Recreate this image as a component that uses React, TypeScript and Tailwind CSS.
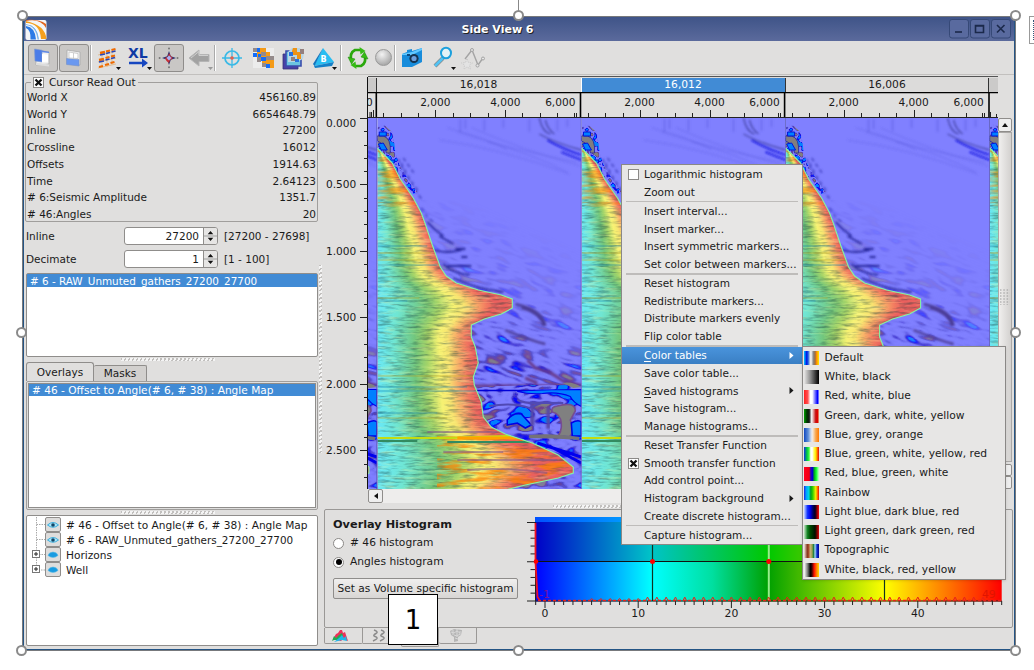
import React from "react";

const edge: [number, number][] = [
  [0, 148], [5, 153], [15, 163], [23, 179], [36, 198], [44, 213], [48, 224], [55, 245], [63, 267],
  [69, 276], [79, 283], [101, 290], [124, 295], [135, 299], [135, 308], [124, 314], [107, 319], [94, 325],
  [94, 337], [98, 347], [101, 363], [96, 377], [97, 385], [104, 402], [106, 417], [114, 427], [128, 434],
  [155, 443], [181, 455], [196, 467], [196, 473], [181, 478], [148, 485], [130, 489.5],
];

const edgeLine = edge.map(([x, y]) => `${x},${y}`).join(" ");

function edgeAt(y: number) {
  for (let i = 1; i < edge.length; i++) {
    const [x0, y0] = edge[i - 1];
    const [x1, y1] = edge[i];
    if (y <= y1) return x0 + ((x1 - x0) * (y - y0)) / (y1 - y0);
  }
  return 130;
}

const rows = Array.from({ length: 171 }, (_, i) => {
  const y = 148 + i * 2;
  let w = 0;
  for (let k = -6; k <= 6; k++) w += edgeAt(Math.max(149, Math.min(489, y + k * 2)));
  w /= 13;
  if (w > 92) w = 92 + (w - 92) * 0.7;
  return { y, w: Math.max(w, 4) };
});

function NoiseFilter({ id, freq, seed, slope, offset }: { id: string; freq: string; seed: number; slope: number; offset: number }) {
  return (
    <filter id={id} x="0" y="0" width="100%" height="100%" colorInterpolationFilters="sRGB">
      <feTurbulence type="fractalNoise" baseFrequency={freq} numOctaves={2} seed={seed} />
      <feColorMatrix values={`${slope} 0 0 0 ${offset} ${slope} 0 0 0 ${offset} ${slope} 0 0 0 ${offset} 0 0 0 0 1`} />
      <feComponentTransfer>
        <feFuncR type="table" tableValues="0 0 0.25 0.46 0.5 0.5 0.46 0.29 0.44 0.5 0.5" />
        <feFuncG type="table" tableValues="0.5 0 0.2 0.46 0.5 0.5 0.46 0.27 0.25 0.48 0.5" />
        <feFuncB type="table" tableValues="1 1 0.8 0.96 1 1 0.96 0.78 0.55 0.5 0.5" />
      </feComponentTransfer>
      <feComposite in2="SourceGraphic" operator="in" />
    </filter>
  );
}

function Seismic() {
  return (
    <svg className="block h-[371px] w-[630px]" viewBox="368 118 630 371">
      <defs>
        <linearGradient id="angle">
          <stop offset="0" stopColor="#68e8f8" />
          <stop offset="0.18" stopColor="#70e6d2" />
          <stop offset="0.4" stopColor="#72c67c" />
          <stop offset="0.52" stopColor="#a4d468" />
          <stop offset="0.65" stopColor="#f6f272" />
          <stop offset="0.74" stopColor="#f8e470" />
          <stop offset="0.84" stopColor="#f8ac68" />
          <stop offset="0.93" stopColor="#f27a60" />
          <stop offset="1" stopColor="#ea605e" />
        </linearGradient>
        <linearGradient id="diag" gradientUnits="userSpaceOnUse" x1="70" y1="400" x2="150" y2="225">
          <stop offset="0" stopColor="white" />
          <stop offset="0.35" stopColor="white" stopOpacity="0.9" />
          <stop offset="0.7" stopColor="white" stopOpacity="0.2" />
          <stop offset="1" stopColor="white" stopOpacity="0" />
        </linearGradient>
        <mask id="deep" maskUnits="userSpaceOnUse" x="0" y="118" width="205" height="372">
          <rect x="0" y="200" width="205" height="290" fill="url(#diag)" />
        </mask>
        <NoiseFilter id="soft" freq="0.04 0.12" seed={7} slope={1.5} offset={-0.27} />
        <NoiseFilter id="strong" freq="0.045 0.09" seed={12} slope={2.4} offset={-0.8} />
        <NoiseFilter id="shallow" freq="0.13 0.12" seed={4} slope={3.4} offset={-1.3} />
        <filter id="streak" x="0" y="0" width="100%" height="100%" colorInterpolationFilters="sRGB">
          <feTurbulence type="fractalNoise" baseFrequency="0.07 0.42" numOctaves={3} seed={3} />
          <feColorMatrix values="0 0 0 0 0.1  0 0 0 0 0.25  0 0 0 0 0.25  2.6 0 0 0 -1.15" />
        </filter>
        <filter id="glint" x="0" y="0" width="100%" height="100%" colorInterpolationFilters="sRGB">
          <feTurbulence type="fractalNoise" baseFrequency="0.05 0.3" numOctaves={3} seed={21} />
          <feColorMatrix values="0 0 0 0 1  0 0 0 0 1  0 0 0 0 0.65  3 0 0 0 -1.5" />
        </filter>
        <filter id="warm" x="0" y="0" width="100%" height="100%" colorInterpolationFilters="sRGB">
          <feTurbulence type="fractalNoise" baseFrequency="0.03 0.17" numOctaves={3} seed={9} />
          <feColorMatrix values="0 0 0 0 1  0 0 0 0 0.5  0 0 0 0 0  5 0 0 0 -2.4" />
        </filter>
        <filter id="blur1"><feGaussianBlur stdDeviation="0.8" /></filter>
        <clipPath id="muted"><polygon points={`0,148 ${edgeLine} 0,490`} /></clipPath>
        <clipPath id="frame"><rect x="0" y="118" width="204.2" height="372" /></clipPath>
        <g id="gather" clipPath="url(#frame)">
          <rect x="0" y="118" width="205" height="372" fill="#8080ff" />
          <g mask="url(#deep)"><rect x="0" y="120" width="400" height="390" filter="url(#soft)" transform="rotate(18 0 200)" /></g>
          <g fill="none" filter="url(#blur1)">
            <g stroke="#5050d4" strokeOpacity="0.35" strokeWidth="1">
              <path d="M80 132q55 18 120 30M95 128q50 22 108 38M62 140q60 8 130 34M110 142q45 12 80 30M70 128q40 10 60 22" />
              <path d="M83 119v13M88 119v10M107 119v12M126 119v9M152 119v13M180 119v12M190 119v8" strokeWidth="2" />
            </g>
            <path d="M162 118q3 14 11 16M168 120q2 9 9 14M162 134q16 9 42 16" stroke="#4a4aad" strokeWidth="1.4" />
            <path d="M170 140q18 10 34 15M184 152l20 8" stroke="#1212e0" strokeWidth="1.6" />
            <path d="M50 222q7 8 16 14M62 236l14 8M56 250q14 4 28 0M66 264q8 9 26 11M76 278q20 10 50 14M70 266h24M78 249h10M84 257h6" stroke="#28289c" strokeWidth="1.8" />
            <path d="M144 308q20 5 22 18M138 304q28 6 30 22M128 330q24 10 40 14" stroke="#4c3c98" strokeWidth="2.4" />
            <path d="M24 163q6 14 17 28M21 159q8 22 25 42M26 158l12 17M44 208q5 9 12 14" stroke="#4b4bcb" strokeWidth="1.8" strokeDasharray="4 3" />
          </g>
          <path d="M0 128q5-8 9-1l6 5q2 8 3 21l5 14 9 14 8 11-4 2-18-23-8-14-10-9Z" filter="url(#shallow)" />
          <path d="M0 136h6q8 2 7 17h-4q-1-9-9-12Z" fill="#817e80" stroke="#26269d" strokeWidth="0.8" />
          <path d="M2 132h7v4H2ZM1 144l5-1 4 7H4ZM8 160h9v3H8Z" fill="#0080ff" stroke="#0015da" />
          <path d="M150 360l8 8 14 4 14 9 20 5M148 378l12 5M96 386h108" fill="none" stroke="#673a8b" strokeWidth="3" filter="url(#blur1)" />
          <path d="M100 387q40-2 104-2v55q-60 2-90-6l-12-20Z" filter="url(#strong)" />
          <path d="M98 390.500h60" stroke="#0000d8" strokeWidth="1.5" />
          <path d="M140 391.500q20-2 64-2v17q-8-4-11-10-12-5-28-3-12 1-25-2Z" fill="#0080ff" stroke="#0000ed" strokeWidth="1.2" />
          <path d="M185 383q10-2 19 4l-8 1Z" fill="#808080" />
          <path d="M180 406q18-5 18 5l-5 9 4 11-6 7h-12q6-6 5-15t-9-11q-2-5 5-6Z" fill="#808080" stroke="#764c91" strokeWidth="1.6" />
          <path d="M130 420q6-8 14-6l10 11-6 3-8-5-10 2ZM194 423q7-4 10-1v14h-9Z" fill="#0080ff" stroke="#0000e5" strokeWidth="1.6" />
          <path d="M155 404v22M171 407v22" stroke="#5846a5" strokeWidth="4" filter="url(#blur1)" />
          <path d="M112 406q24-4 40 2l12-5 22 0M140 400q12 5 28 2" fill="none" stroke="#5049b5" strokeWidth="2" />
          <path d="M145 438q20-7 60 0v52h-80l60-15Z" filter="url(#strong)" opacity="0.8" />
          <path d="M152 435q25-2 50 2v3q-24-2-50-2Z" fill="#747279" />
          <path d="M160 443l44 14M172 446l32 17" stroke="#0000ee" strokeWidth="3" />
          <g clipPath="url(#muted)">
            <rect x="0" y="148" width="205" height="342" fill="#ea605e" />
            {rows.map((r) => (
              <rect key={r.y} x="0" y={r.y} width={r.w} height="2.3" fill="url(#angle)" />
            ))}
            <rect x="0" y="148" width="205" height="342" filter="url(#streak)" opacity="0.42" />
            <rect x="0" y="148" width="205" height="342" filter="url(#glint)" opacity="0.3" />
            <rect x="60" y="436" width="140" height="54" filter="url(#warm)" opacity="0.7" />
            <rect x="0" y="148" width="60" height="60" filter="url(#warm)" opacity="0.5" />
            <g fill="none" opacity="0.55">
              <path d="M0 253h54M0 260h62M0 298h42M0 376h96M0 418h70" stroke="#b8a020" strokeWidth="1.2" />
              <path d="M0 265h60M0 301h30M0 391h100M0 387h90M0 413h60M0 246h50" stroke="#107fae" strokeWidth="1.1" />
              <path d="M50 432h70M66 452h60M90 470q40-3 80 3M80 460h100" stroke="#7d558c" strokeWidth="2" />
            </g>
            <path d="M0 438h70l60-2 22 4" stroke="#c4dc10" strokeWidth="1.8" fill="none" />
            <path d="M80 438h62" stroke="#ffa200" strokeWidth="3" />
            <path d="M0 441h40M70 442h120" stroke="#338b60" strokeWidth="2" />
          </g>
          <polyline points={edgeLine} fill="none" stroke="#83f5a4" strokeWidth="1.1" />
          <path d="M204 118v372" stroke="#5555aa" strokeWidth="1" />
        </g>
      </defs>
      <use href="#gather" x="173" />
      <use href="#gather" x="377.3" />
      <use href="#gather" x="581.5" />
      <use href="#gather" x="785.6" />
      <use href="#gather" x="989.7" />
    </svg>
  );
}

function TopAxis() {
  const starts = [377.3, 581.5, 785.6];
  return (
    <svg className="block h-[26px] w-[630px]" viewBox="368 92 630 26" fontFamily="DejaVu Sans, sans-serif" fontSize="10.6" fill="#1a1a1a">
      <path d="M368 92.5H998" stroke="#000" strokeWidth="1.6" />
      <path d="M368 117.5H998M370 112v5M371.5 112v5M373.5 110v7M990.5 112v5M996.5 114v3" stroke="#222" />
      <text x="366" y="106">0</text>
      {starts.map((s) => (
        <g key={s}>
          <path d={`M${s - 1} 92v25`} stroke="#000" strokeWidth="1.6" />
          {[7, 24.5, 42, 59, 76.5, 94, 111.5, 129, 146, 163.5, 181, 197.5, 199.5].map((d, i) => (
            <path key={d} d={`M${Math.round(s + d) - 0.5} ${i === 3 || i === 7 ? 110 : 113}V117`} stroke="#222" />
          ))}
          <text x={s + 58} y="106" textAnchor="middle">2,000</text>
          <text x={s + 128} y="106" textAnchor="middle">4,000</text>
          <text x={s + 183} y="106" textAnchor="middle">6,000</text>
        </g>
      ))}
      <path d="M989 92v25" stroke="#000" strokeWidth="1.6" />
    </svg>
  );
}

function SideAxis() {
  return (
    <svg className="block h-[412px] w-[44px]" viewBox="324 77 44 412" fontFamily="DejaVu Sans, sans-serif" fontSize="10.6" fill="#1a1a1a">
      <path d="M368 77V489" stroke="#111" strokeWidth="2" />
      {Array.from({ length: 28 }, (_, i) => {
        const y = 118 + i * 13.29;
        return <path key={i} d={`M${i % 5 ? 364 : 360} ${Math.round(y) + 0.5}H368`} stroke="#222" />;
      })}
      {["0.000", "0.500", "1.000", "1.500", "2.000", "2.500"].map((t, i) => (
        <text key={t} x="326" y={i === 0 ? 127 : 122 + i * 66.4}>{t}</text>
      ))}
    </svg>
  );
}

function Histogram() {
  const px = (v: number) => 545 + v * 9.32;
  return (
    <svg className="block h-[112px] w-[480px]" viewBox="524 512 480 112" fontFamily="DejaVu Sans, sans-serif" fontSize="10.8" fill="#1a1a1a">
      <defs>
        <linearGradient id="lower">
          <stop offset="0" stopColor="#0000ff" /><stop offset=".25" stopColor="#00ffff" /><stop offset=".38" stopColor="#00dfa0" /><stop offset=".5" stopColor="#00a000" /><stop offset=".75" stopColor="#ffff00" /><stop offset="1" stopColor="#ff0000" />
        </linearGradient>
        <linearGradient id="upper">
          <stop offset="0" stopColor="#0000c8" /><stop offset=".25" stopColor="#00c4c8" /><stop offset=".5" stopColor="#00c800" /><stop offset=".75" stopColor="#c8c800" /><stop offset="1" stopColor="#c80000" />
        </linearGradient>
        <linearGradient id="strip"><stop offset="0" stopColor="#0050ff" /><stop offset=".2" stopColor="#009bff" /><stop offset="1" stopColor="#00ffff" /></linearGradient>
      </defs>
      <rect x="535" y="517" width="466.7" height="5" fill="url(#strip)" />
      <rect x="535" y="522" width="466.7" height="40" fill="url(#upper)" />
      <rect x="535" y="561.5" width="466.7" height="40" fill="url(#lower)" />
      <path d="M535 561.5H1001" stroke="#111" strokeWidth="1.2" />
      <path d="M652.5 522V601M884.5 522V601" stroke="#132" strokeWidth="1.2" />
      <path d="M768.8 522V601" stroke="#98ed8b" strokeWidth="2" />
      <path d="M535.5 522V601H1001.5" fill="none" stroke="#222" />
      {Array.from({ length: 11 }, (_, i) => (
        <path key={i} d={`M${i % 5 ? 530.5 : 527} ${522.5 + i * 7.85}H535`} stroke="#222" />
      ))}
      {Array.from({ length: 51 }, (_, i) => (
        <path key={i} d={`M${px(i - 1)} 601v${(i - 1) % 10 === 0 ? 7 : 4}`} stroke="#222" />
      ))}
      <path d="M535.5 523V562l2 35 2 3" fill="none" stroke="#f01020" strokeWidth="1.8" />
      <path d="M538 600.5H1001" stroke="#e8201a" strokeWidth="1.3" strokeDasharray="3 2" />
      {Array.from({ length: 43 }, (_, i) => (
        <path key={i} d={`M${px(i + 5) - 1.8} 600.5l1.8 ${i < 6 ? -2 : -3.4} 1.8 ${i < 6 ? 2 : 3.4}`} fill="none" stroke="#e8201a" strokeWidth="1" />
      ))}
      <g fill="#f00"><circle cx="536" cy="561.5" r="2.3" /><circle cx="652.5" cy="561.5" r="2.5" /><circle cx="768.8" cy="561.5" r="2.5" /></g>
      <text x="539" y="598" fill="#7b109c">-1</text>
      <text x="982" y="598" fill="#df1500">49</text>
      {[0, 10, 20, 30, 40].map((v) => (
        <text key={v} x={px(v)} y="617" textAnchor="middle">{v}</text>
      ))}
    </svg>
  );
}

const menu: (string | null)[] = [
  "Logarithmic histogram", "Zoom out", null,
  "Insert interval...", "Insert marker...", "Insert symmetric markers...", "Set color between markers...", null,
  "Reset histogram", "Redistribute markers...", "Distribute markers evenly", "Flip color table", null,
  "Color tables", "Save color table...", "Saved histograms", "Save histogram...", "Manage histograms...", null,
  "Reset Transfer Function", "Smooth transfer function", "Add control point...", "Histogram background", "Create discrete histogram...", null,
  "Capture histogram...",
];

function Box({ checked }: { checked?: boolean }) {
  return (
    <span className="flex h-[11px] w-[11px] shrink-0 items-center justify-center border border-[#8c8a88] bg-white">
      {checked && (
        <svg width="9" height="9" viewBox="0 0 9 9"><path d="M1.5 1.5l6 6M7.5 1.5l-6 6" stroke="#111" strokeWidth="2.3" /></svg>
      )}
    </span>
  );
}

function ContextMenu() {
  return (
    <div className="absolute left-[621px] top-[164px] flex h-[381px] w-[182px] flex-col border border-[#8a8886] bg-[#e7e6e5] pt-[0.5px] text-[10.5px]">
      {menu.map((t, i) => {
        if (t === null) return <div key={i} className="mx-1 h-[1.7px] shrink-0 bg-[#bebcba]" />;
        const active = t === "Color tables";
        const under = active || t === "Saved histograms";
        const arrow = under || t === "Histogram background";
        return (
          <div key={i} className={active ? "flex h-[17.67px] items-center bg-gradient-to-b from-[#4a94dc] to-[#3a7fc4] text-white" : "flex h-[17.67px] items-center"}>
            <span className="flex w-[22px] items-center pl-[6px]">
              {i === 0 && <Box />}
              {t === "Smooth transfer function" && <Box checked />}
            </span>
            <span className={t.startsWith("Set color") ? "grow whitespace-nowrap tracking-[0.04px]" : "grow whitespace-nowrap"}>
              {under ? <><span className="border-b border-current">{t[0]}</span>{t.slice(1)}</> : t}
            </span>
            {arrow && <svg className="mr-2 shrink-0" width="5" height="7" viewBox="0 0 5 7"><path d="M0.5 0v7L4.5 3.5z" fill="currentColor" /></svg>}
          </div>
        );
      })}
    </div>
  );
}

const tables: { name: string; cls: string }[] = [
  { name: "Default", cls: "bg-[linear-gradient(90deg,#00c8ff_0%,#0010e8_18%,#2060e0_28%,#e8e8e8_42%,#f0f0f0_48%,#888_62%,#a06a40_74%,#ff9000_84%,#ffe800_100%)]" },
  { name: "White, black", cls: "bg-[linear-gradient(90deg,#e7e6e5_0%,#888_45%,#222_85%,#000_100%)]" },
  { name: "Red, white, blue", cls: "bg-[linear-gradient(90deg,#ff2020_0%,#ff5050_25%,#fff_42%,#fff_55%,#8080ff_72%,#0000ff_90%,#a0a0ff_100%)]" },
  { name: "Green, dark, white, yellow", cls: "bg-[linear-gradient(90deg,#00a000_0%,#003000_20%,#181818_35%,#eee_50%,#e8c8c8_58%,#c81010_78%,#e00000_90%,#e8b080_100%)]" },
  { name: "Blue, grey, orange", cls: "bg-[linear-gradient(90deg,#1048c0_0%,#6090d8_28%,#d8e0f0_48%,#f4e8dc_58%,#f8a850_78%,#ff7800_100%)]" },
  { name: "Blue, green, white, yellow, red", cls: "bg-[linear-gradient(90deg,#1030e0_0%,#00c840_20%,#40ff40_34%,#fff_45%,#fff_55%,#ffff70_65%,#ffe800_78%,#ff5000_92%,#d01010_100%)]" },
  { name: "Red, blue, green, white", cls: "bg-[linear-gradient(90deg,#ff0020_0%,#f00010_35%,#3000c0_45%,#0000d0_57%,#00a020_68%,#10ff30_82%,#d0ffd0_100%)]" },
  { name: "Rainbow", cls: "bg-[linear-gradient(90deg,#2020e0_0%,#00a0ff_14%,#00d8e0_32%,#00a020_45%,#30d000_58%,#f0f000_78%,#ff7000_90%,#e81000_100%)]" },
  { name: "Light blue, dark blue, red", cls: "bg-[linear-gradient(90deg,#c8d8ff_0%,#1030ff_24%,#0000e8_42%,#000060_60%,#000020_74%,#c00000_92%,#f01010_100%)]" },
  { name: "Light green, dark green, red", cls: "bg-[linear-gradient(90deg,#c8e8c8_0%,#108020_24%,#004800_42%,#002800_60%,#001000_74%,#a00000_92%,#d01010_100%)]" },
  { name: "Topographic", cls: "bg-[linear-gradient(90deg,#f0e8e0_0%,#883820_22%,#a84828_30%,#c8b078_42%,#a0a050_54%,#208040_63%,#a0d8f0_74%,#1030d0_86%,#000090_100%)]" },
  { name: "White, black, red, yellow", cls: "bg-[linear-gradient(90deg,#fff_0%,#777_25%,#000_42%,#300_52%,#ff1000_68%,#ff7000_82%,#ffd800_100%)]" },
];

function SubMenu() {
  return (
    <div className="absolute left-[802px] top-[346px] flex h-[234px] w-[204px] flex-col border border-[#8a8886] bg-[#e7e6e5] pt-[1.5px] text-[10.7px] shadow-sm">
      {tables.map((t) => (
        <div key={t.name} className="flex h-[19.27px] shrink-0 items-center whitespace-nowrap">
          <span className={`ml-[1px] mr-[5.5px] h-[14px] w-[15px] ${t.cls}`} />
          {t.name}
        </div>
      ))}
    </div>
  );
}

function Caret() {
  return <path d="M22 23h5l-2.5 3z" fill="#111" />;
}
function Icon({ children, w = "w-[30px]" }: { children: React.ReactNode; w?: string }) {
  return <div className={`flex shrink-0 items-center justify-center ${w}`}><svg width="28" height="28" viewBox="0 0 28 28" className="overflow-visible">{children}</svg></div>;
}
function Pressed({ children }: { children: React.ReactNode }) {
  return <div className="mr-px flex h-[28px] w-[30px] shrink-0 items-center justify-center rounded-[3px] border border-[#8f8d8b] bg-[#c9c7c5]"><svg width="28" height="26" viewBox="0 1 28 26">{children}</svg></div>;
}
const Sep = () => <div className="h-[26px] w-[2px] shrink-0 border-l border-[#aaa] bg-white" />;

function Toolbar() {
  return (
    <div className="flex h-[34px] shrink-0 items-center border-b border-[#c2c0be] pl-[4px]">
      <Pressed>
        <path d="M7 6l13 2v12l-13 1z" fill="#f1f1f1" stroke="#aaa" strokeWidth=".8" /><path d="M5.5 5l7.5 1.2V18l-7-1z" fill="#4a7ce8" stroke="#7d98cf" strokeWidth=".6" /><path d="M13 6.5l7 1.2V9l-7-.8z" fill="#5c86e6" /><path d="M13 10l6 .8v7L13 18z" fill="#fff" /><path d="M7 21l13 1.5v-2L7 18.5z" fill="#ddd" />
      </Pressed>
      <Pressed>
        <path d="M7 6l13 2v13l-13-1z" fill="#f1f1f1" stroke="#aaa" strokeWidth=".8" /><path d="M6.5 14.5l12.5 1v6.5l-12.5-1.5z" fill="#6a98f0" stroke="#7b94c8" strokeWidth=".6" /><path d="M9 8l9 1.5v5L9 14zM13.5 9v5.5" fill="#fff" stroke="#bbb" strokeWidth=".7" />
      </Pressed>
      <Sep />
      <Icon w="w-[31px]">
        <path d="M8 7v17M13 6v17M18 5v16M4 11l18-4M4 18l18-4M4 24l18-4" stroke="#e0c095" fill="none" />
        <path d="M6 9l5-1M12 7.5l4-1M17.5 6l4-1M5 16l5-1M11.5 14l4-1M17 12.5l4-1M5 23l4-1M11 21l4-1M16.5 19l4-1" stroke="#ef6a00" strokeWidth="2.3" />
        <path d="M6 11l5-1M12 9.5l4-1M17.5 8l4-1M5 18l5-1M11.5 16l4-1M17 14.5l4-1" stroke="#2846ba" strokeWidth="1.7" /><Caret />
      </Icon>
      <Icon w="w-[31px]">
        <text x="3" y="14" fontFamily="DejaVu Sans" fontWeight="bold" fontSize="14" fill="#103aa4">XL</text>
        <path d="M4 19h17" stroke="#1747c0" strokeWidth="2.5" /><path d="M17 14.5l6 4.5-6 4.5z" fill="#1747c0" /><Caret />
      </Icon>
      <Pressed>
        <path d="M14 7l1.8 5.2 5.2 1.8-5.2 1.8L14 21l-1.8-5.2L7 14l5.2-1.8z" fill="#252c6c" /><path d="M14 9l1.8 3.2L18 14l-3.2 2.5L14 19l-2.5-2L10 14l3-1.5z" fill="#c72e35" /><path d="M14 11.5l2.5 2.5-2.5 2.5-2.5-2.5z" fill="#a8b4f4" />
        <g fill="#777"><circle cx="14" cy="4.6" r="1" /><circle cx="4.6" cy="14" r="1" /><circle cx="22.5" cy="14" r="1" /><circle cx="14" cy="23.3" r="1" /></g>
      </Pressed>
      <Icon w="w-[29px]"><path d="M3 14L13 6v4.5h10v7H13V22z" fill="#a2a2a2" stroke="#b5b5b5" /><path d="M5 14l8-6.5v4h9" fill="none" stroke="#cfcfcf" /><path d="M22 23h5l-2.5 3z" fill="#999" /></Icon>
      <Sep />
      <Icon w="w-[31px]"><circle cx="14" cy="14" r="7" fill="none" stroke="#39b9e6" strokeWidth="1.7" /><path d="M14 4v20M4 14h20" stroke="#39b9e6" strokeWidth="1.3" /><circle cx="14" cy="14" r="1.8" fill="#e2604c" /></Icon>
      <Icon w="w-[31px]">
        <rect x="4" y="4" width="21" height="20" fill="#ececec" />
        <path d="M8 4h9v4h4v8h4v8h-8v-3h-4v-4H8z" fill="#f49a16" />
        <path d="M4 4h4v4H4zM12 8h5v4h-5zM17 12h8v4h-8zM8 13h4v5H8zM13 19h4v4h-4z" fill="#948a8a" />
        <path d="M8 4h3v4H8zM4 9h4v4H4zM12 13h5v4h-5zM17 20h4v4h-4zM9 10h3v3H9z" fill="#126dfa" />
      </Icon>
      <Icon>
        <path d="M4 10h4v11h11v4H4z" fill="#4a3fa6" stroke="#353377" strokeWidth=".8" /><path d="M7 7h15v15H7z" fill="#6cc4e0" stroke="#3a4cac" strokeWidth="1.6" /><path d="M9 8l4-4h8l4 5-1 6-7 3H9z" fill="#b9d7e4" /><path d="M14 4h4v4h4v7h-4v-4h-5V7z" fill="#ef9315" /><path d="M10 8h4v4h-4zM16 15h4v3h-4z" fill="#2a72de" /><path d="M21 5h4v5h-4zM12 13h4v4h-4z" fill="#94807e" />
      </Icon>
      <Icon w="w-[32px]">
        <path d="M13 4l11 14-20 4z" fill="#28bdf2" /><path d="M13 4L3 20l1.5 2z" fill="#1374bd" /><path d="M4 22l20-4-2 4-17 2z" fill="#1480c8" /><text x="10.5" y="18" fontFamily="DejaVu Sans" fontWeight="bold" fontSize="8" fill="#fff">B</text><Caret />
      </Icon>
      <Sep />
      <Icon w="w-[31px]">
        <g fill="none" stroke="#2aa80c" strokeWidth="2.6"><path d="M7.5 17.5Q5 9 11 6h5" /><path d="M20.5 10.5Q23 19 17 22h-5" /></g>
        <path d="M15.5 3l6 4-5 3.5zM12.5 25l-6-4 5-3.5z" fill="#36bb15" /><path d="M4 13l3.5 7 3.5-5zM24 15l-3.5-7L17 13z" fill="#36bb15" stroke="#168705" strokeWidth=".5" />
      </Icon>
      <div className="flex w-[21px] shrink-0 justify-center"><div className="h-[17px] w-[17px] rounded-full border border-[#999] bg-[radial-gradient(circle_at_40%_30%,#f3f3f3,#aaa_75%)]" /></div>
      <Sep />
      <Icon w="w-[31px]">
        <path d="M4 10l5-2V6l5-1v2l10-3v14l-10 5H4z" fill="#188cdb" /><path d="M4 10l10-2 10-4v2L14 11H4z" fill="#61c8ff" /><circle cx="16" cy="14.5" r="4.6" fill="#17334f" /><circle cx="16" cy="14.5" r="2.6" fill="#6d9fdd" /><path d="M9 10h3v2H9z" fill="#0d4a80" />
      </Icon>
      <Icon w="w-[31px]"><path d="M14 14l-8 8" stroke="#888" strokeWidth="4" /><path d="M14 14l-8 8" stroke="#51c2f3" strokeWidth="2.6" /><ellipse cx="17" cy="9" rx="5" ry="5.3" fill="#e3f2f6" stroke="#1ca0dd" strokeWidth="2" /><Caret /></Icon>
      <Icon><path d="M6 15l7-9 6 15 5-7" fill="none" stroke="#a4a4a4" strokeWidth="1.4" /><g fill="#e6e6e6" stroke="#a3a3a3"><circle cx="13" cy="6" r="1.5" /><circle cx="18.5" cy="21.5" r="1.5" /><circle cx="24" cy="14.5" r="1.5" /></g><path d="M8 15l1.5 3.5 4 .5-3 2 1 4L8 23l-3 2 .5-4-3-2 4-.5z" fill="#e3e3e3" stroke="#bbb" strokeWidth=".6" strokeDasharray="1.5 1" /></Icon>
    </div>
  );
}

function Spin({ label, value, range }: { label: string; value: string; range: string }) {
  return (
    <div className="flex h-[22.7px] items-center">
      <span className="w-[99px] pl-px">{label}</span>
      <div className="flex h-[18px] w-[94px] overflow-hidden rounded-[3px] border border-[#8f8d8b] bg-white">
        <span className="flex grow items-center justify-end pr-1">{value}</span>
        <svg width="14" height="16" viewBox="0 0 14 16" className="border-l border-[#8f8d8b] bg-[#e6e5e4]"><path d="M0 8h14" stroke="#999" /><path d="M4 6h6L7 2.5zM4 10h6l-3 3.5z" fill="#111" /></svg>
      </div>
      <span className="ml-[6px]">{range}</span>
    </div>
  );
}

const Dots = () => <div className="h-[3px] w-[94px] bg-[repeating-linear-gradient(115deg,#c2c0be_0,#c2c0be_1.5px,#f4f4f4_1.5px,#f4f4f4_3.6px)]" />;

const readout = [
  ["World X", "456160.89"], ["World Y", "6654648.79"], ["Inline", "27200"], ["Crossline", "16012"],
  ["Offsets", "1914.63"], ["Time", "2.64123"], ["# 6:Seismic Amplitude", "1351.7"], ["# 46:Angles", "20"],
];

const tree = [
  { name: "# 46 - Offset to Angle(# 6, # 38) : Angle Map", eye: true },
  { name: "# 6 - RAW_Unmuted_gathers_27200_27700", eye: true },
  { name: "Horizons", eye: false },
  { name: "Well", eye: false },
];

function LeftPanel() {
  return (
    <div className="flex w-[295px] shrink-0 flex-col pl-[1px] text-[10.5px]">
      <div className="relative mt-[7px] h-[140px] w-[293px] shrink-0 rounded-[2px] border border-[#a09e9c] pt-[5.8px]">
        <div className="absolute -top-[7px] left-[5px] flex h-[12px] items-center gap-[5px] bg-[#e0dfde] pl-[2px] pr-[2px]"><Box checked />Cursor Read Out</div>
        {readout.map(([k, v]) => (
          <div key={k} className="flex h-[16.75px] items-center justify-between pl-px pr-[1px]"><span>{k}</span><span>{v}</span></div>
        ))}
      </div>
      <div className="mt-[3px] shrink-0"><Spin label="Inline" value="27200" range="[27200 - 27698]" /><Spin label="Decimate" value="1" range="[1 - 100]" /></div>
      <div className="ml-[1px] mt-[3px] h-[84px] w-[292px] shrink-0 rounded-[2px] border-[1.5px] border-[#8f8d8b] bg-white">
        <div className="flex h-[13px] items-center bg-[#418bd5] pl-[3px] text-[10.4px] text-white">{"# 6 - RAW_Unmuted_gathers_27200_27700"}</div>
      </div>
      <div className="mt-[1px] flex shrink-0 justify-center pr-2"><Dots /></div>
      <div className="ml-[1px] mt-px flex h-[19px] shrink-0 items-end">
        <div className="flex h-[19px] w-[68px] items-center justify-center rounded-t-[3px] border border-b-0 border-[#8f8d8b]">Overlays</div>
        <div className="flex h-[16px] w-[53px] items-center justify-center rounded-t-[2px] border border-b-0 border-l-0 border-[#8f8d8b] bg-[#d2d0ce] pb-px">Masks</div>
      </div>
      <div className="ml-[1px] h-[129px] w-[292px] shrink-0 rounded-[2px] border border-[#a09e9c] p-px">
        <div className="h-full border-[1.5px] border-t border-[#8f8d8b] bg-white">
          <div className="flex h-[12px] items-center bg-[#418bd5] pl-[3px] text-[10.6px] text-white">{"# 46 - Offset to Angle(# 6, # 38) : Angle Map"}</div>
        </div>
      </div>
      <div className="mt-[1px] flex shrink-0 justify-center pr-2"><Dots /></div>
      <div className="ml-[1px] mt-[1px] h-[131px] w-[292px] shrink-0 rounded-[2px] border-[1.5px] border-[#8f8d8b] bg-white pt-[1px] text-[10.6px]">
        {tree.map((t, i) => (
          <div key={t.name} className={i === 1 ? "flex h-[15px] items-center whitespace-nowrap text-[10.4px]" : "flex h-[15px] items-center whitespace-nowrap"}>
            <svg width="18" height="15" viewBox="0 0 18 15" className="shrink-0">
              <path d={t.name === "Well" ? "M9.5 0v8h9" : "M9.5 0v15M9.5 7.5h9"} fill="none" stroke="#aaa" strokeDasharray="1.5 1" />
              {!t.eye && <><rect x="5.5" y="3.5" width="7" height="7" fill="#fff" stroke="#777" /><path d="M7 7h4M9 5v4" stroke="#222" /></>}
            </svg>
            <svg width="16" height="15" viewBox="0 0 16 15" className="mr-[5px] shrink-0">
              <rect x=".5" y=".5" width="15" height="14" rx="1.5" fill="#dedddc" stroke="#8f8d8b" />
              {t.eye ? <><path d="M2.5 8q5.5-5 11 0-5.5 4.5-11 0z" fill="#aee7fb" stroke="#39aede" /><circle cx="8" cy="8" r="1.8" fill="#124565" /></> : <path d="M3 8.5q1-3.5 5-3.5t5 3.5q-5 4-10 0z" fill="#199be1" stroke="#62bde6" strokeWidth=".6" />}
            </svg>
            {t.name}
          </div>
        ))}
      </div>
    </div>
  );
}

function RightPanel() {
  return (
    <div className="flex w-[691px] shrink-0 flex-col pl-[1px] pt-px">
      <div className="flex h-[413px] shrink-0">
        <div className="w-[44px] shrink-0 pt-px"><SideAxis /></div>
        <div className="flex w-[630px] shrink-0 flex-col">
          <div className="flex h-[16px] shrink-0 border-t border-[#555] bg-[#dcdbda] pt-px text-[10.7px]">
            <div className="w-[9px] border-r border-[#333] bg-[#cbcac9]" />
            <div className="flex w-[204px] items-center justify-center pr-px">16,018</div>
            <div className="flex w-[204px] items-center justify-center border-l border-white bg-[#418bd5] pr-px text-white">16,012</div>
            <div className="flex w-[204px] items-center justify-center border-x border-[#333]">16,006</div>
            <div className="grow bg-[#cbcac9]" />
          </div>
          <TopAxis />
          <Seismic />
        </div>
        <div className="flex w-[14px] shrink-0 flex-col pt-[42px]">
          <div className="flex h-[14px] items-center justify-center rounded-[2px] border border-[#8f8d8b] bg-[#eee]"><svg width="6" height="4" viewBox="0 0 6 4"><path d="M0 4h6L3 0z" fill="#111" /></svg></div>
          <div className="flex w-full grow items-center justify-center border border-[#aaa8a6] bg-gradient-to-r from-[#f0efee] to-[#d3d1cf]">
            <svg width="10" height="16" viewBox="0 0 10 16"><path d="M0 1h10M0 4h10M0 7h10M0 10h10M0 13h10M0 16h10" stroke="#999" strokeDasharray="1.5 1.8" /></svg>
          </div>
          <div className="mt-[2px] h-[12px] shrink-0 rounded-[2px] border border-[#8f8d8b] bg-[#eee]" />
          <div className="h-[13px] shrink-0 rounded-[2px] border border-[#8f8d8b] bg-[#eee]" />
        </div>
      </div>
      <div className="ml-[44px] flex h-[14px] w-[630px] shrink-0 bg-[#eeedec]">
        <div className="flex w-[15px] items-center justify-center rounded-[2px] border border-[#8f8d8b] bg-[#eee]"><svg width="4" height="6" viewBox="0 0 4 6"><path d="M4 0v6L0 3z" fill="#111" /></svg></div>
      </div>
      <div className="flex h-[6px] shrink-0 items-center pl-[229px]"><Dots /></div>
      <div className="flex h-[119px] w-[689px] shrink-0 rounded-[2px] border-[1.5px] border-[#9a9896]">
        <div className="flex w-[199px] shrink-0 flex-col pl-[8px] pt-[6px] text-[10.7px]">
          <div className="flex h-[17px] items-center whitespace-nowrap text-[11.3px] font-bold">Overlay Histogram</div>
          <div className="mt-[1px] flex h-[19px] items-center gap-[6px]"><span className="h-[11px] w-[11px] rounded-full border border-[#8a8886] bg-white" />{"# 46 histogram"}</div>
          <div className="flex h-[18px] items-center gap-[6px]"><span className="flex h-[11px] w-[11px] items-center justify-center rounded-full border border-[#8a8886] bg-white"><span className="h-[6px] w-[6px] rounded-full bg-black" /></span>Angles histogram</div>
          <div className="mt-[7px] flex h-[21px] w-[185px] items-center justify-center whitespace-nowrap rounded-[2px] border border-[#8f8d8b] bg-gradient-to-b from-[#f0efee] to-[#d8d6d4] text-[10.6px]">Set as Volume specific histogram</div>
        </div>
        <div className="pt-[2px]"><Histogram /></div>
      </div>
      <div className="flex h-[19px] shrink-0 items-start">
        <div className="flex h-[16px] w-[39px] items-center justify-center rounded-b-[2px] border border-t-0 border-[#9a9896] pr-2">
          <svg width="16" height="14" viewBox="0 0 16 14"><path d="M1 10l3-5 2-1 2-3h2l1 3 2-1 3 9-5-2-2 2z" fill="#ed305a" /><path d="M0 12l2-5 2 2 3-3 3-2 1 3-3 4H2z" fill="#20ac51" /><path d="M2 13l5-4 3-3 2 3 2-2 1 5-5-1z" fill="#20b7e9" /></svg>
        </div>
        <div className="flex h-[16px] w-[38px] items-center border-b border-[#9a9896] pl-[8px]">
          <svg width="18" height="14" viewBox="0 0 18 14"><path d="M3 1q5 2 2 3.500T3 7q5 1.500 2 3.500L2 12M10 1q5 2 2 3.500T10 7q5 1.500 2 3.500L9 12" fill="none" stroke="#8b8b8b" strokeWidth="1.400" /></svg>
        </div>
        <div className="h-[19px] w-[38px] rounded-b-[2px] border border-t-0 border-[#9a9896]" />
        <div className="flex h-[16px] w-[38px] items-center justify-center rounded-b-[2px] border border-l-0 border-t-0 border-[#9a9896] pr-1">
          <svg width="14" height="13" viewBox="0 0 14 13"><path d="M1 2l4-2 8 1-1 5-3 2v4l-4 1V8L2 6z" fill="#b5b5b5" /><path d="M2 3l3 1 3-2 3 2M5 6l3 1 3-2M6 9l3 1M4 1v5M8 0v8M11 2v4" stroke="#d8d8d8" fill="none" /></svg>
        </div>
      </div>
    </div>
  );
}

const handles = [
  "left-[17px] top-[10px]", "left-[513px] top-[10px]", "left-[1010px] top-[10px]",
  "left-[16px] top-[327px]", "left-[1010px] top-[327px]",
  "left-[16px] top-[645px]", "left-[513px] top-[645px]", "left-[1010px] top-[645px]",
];

export default function App() {
  return (
    <div className="relative h-[670px] w-[1034px] overflow-hidden bg-white pl-[22px] pt-[16px] font-['DejaVu_Sans',sans-serif] leading-none text-[#1a1a1a]">
      <div className="h-[635px] w-[994px] border border-[#77797c]">
        <div className="flex h-[633px] flex-col border-x border-b-[1.5px] border-[#245485] bg-[#e0dfde]">
          <div className="flex h-[24px] shrink-0 items-center bg-gradient-to-b from-[#3f5488] to-[#5b6a9c]">
            <svg className="ml-[1px] shrink-0" width="22" height="21" viewBox="0 0 22 21"><rect x=".5" y="1" width="21" height="20" rx="2" fill="#f4f5f6" /><path d="M1 4Q15 4 16 20h5.500Q20 6 1 2z" fill="#f5a01d" /><path d="M1 7Q10 8 11 20.500H5.500Q6 11 1 9z" fill="#2d7be6" /><path d="M1 5Q12 5 14 20.500h-1.500Q11 7 1 6z" fill="#7bb4ee" /><path d="M1 2Q15-1 21 9V5Q14 0 1 1z" fill="#e16621" /><path d="M1 4.500q12 1 14 16" fill="none" stroke="#fff" /></svg>
            <div className="grow pr-[1px] text-center text-[11px] font-bold text-white [text-shadow:1px_1px_0_#222]">Side View 6</div>
            <div className="mr-[3px] flex gap-[1px]">
              {["M6 13h7", "M5.5 6.5h8v7h-8zM5 7h9", "M6 6l7.5 7.5M13.5 6L6 13.5"].map((d) => (
                <svg key={d} width="20" height="20" viewBox="0 0 20 20"><rect x=".5" y=".5" width="19" height="18.5" rx="2.5" fill="#596a9f" stroke="#364977" /><path d={d} fill="none" stroke="#1b294b" strokeWidth="1.6" /></svg>
              ))}
            </div>
          </div>
          <Toolbar />
          <div className="flex min-h-0 grow">
            <LeftPanel />
            <div className="flex w-[4px] shrink-0 flex-col pt-[190px]"><div className="h-[188px] w-[3px] bg-[repeating-linear-gradient(150deg,#c2c0be_0,#c2c0be_1.5px,#f4f4f4_1.5px,#f4f4f4_3.6px)]" /></div>
            <RightPanel />
          </div>
        </div>
      </div>
      <ContextMenu />
      <SubMenu />
      <div className="absolute left-[388px] top-[594px] flex h-[51px] w-[50px] items-center justify-center border border-black bg-white text-[26px] text-black">1</div>
      <div className="absolute left-[518px] top-0 h-[11px] w-px bg-[#888]" />
      {handles.map((h) => (
        <div key={h} className={`absolute h-[11px] w-[11px] rounded-full border-2 border-[#8a8a8a] bg-white ${h}`} />
      ))}
      <div className="absolute left-[1029px] top-[16px] h-[28px] w-[10px] border border-[#999] bg-white pl-[3px] pt-[3px]"><div className="h-[20px] border-l border-dotted border-[#357]" /></div>
    </div>
  );
}
